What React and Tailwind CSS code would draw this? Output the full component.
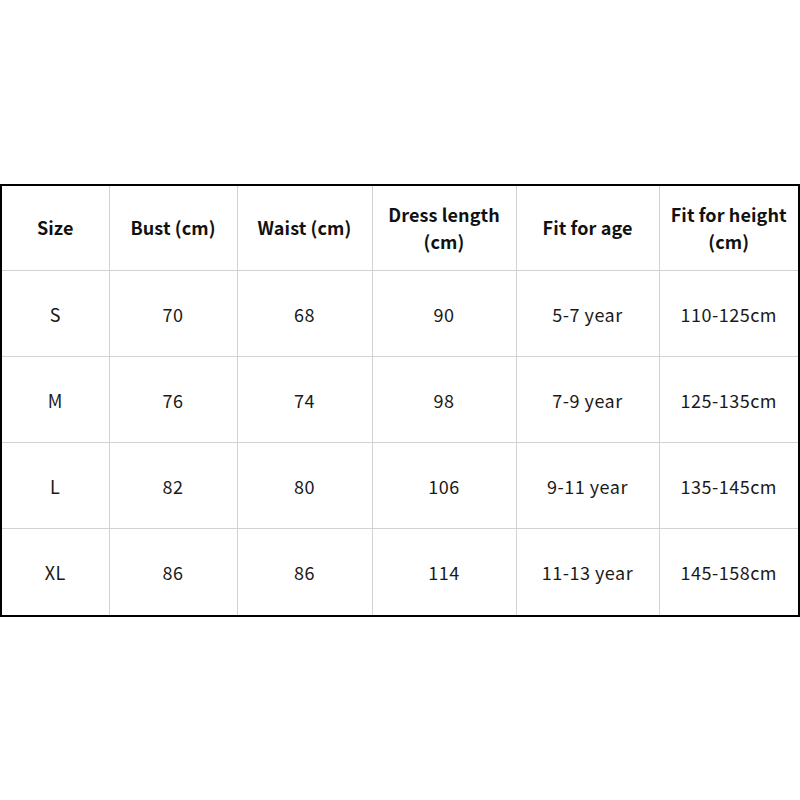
const headers = ['Size', 'Bust (cm)', 'Waist (cm)', ['Dress length', '(cm)'], 'Fit for age', ['Fit for height', '(cm)']];

const rows = [
  ['S', '70', '68', '90', '5-7 year', '110-125cm'],
  ['M', '76', '74', '98', '7-9 year', '125-135cm'],
  ['L', '82', '80', '106', '9-11 year', '135-145cm'],
  ['XL', '86', '86', '114', '11-13 year', '145-158cm'],
];

const widths = ['w-[107px]', 'w-[128px]', 'w-[135px]', 'w-[144px]', 'w-[143px]', 'w-[139px]'];

export default function App() {
  return (
    <div className="flex h-[800px] w-[800px] items-center bg-white" style={{ fontFamily: '"Noto Sans CJK KR", "Open Sans", sans-serif' }}>
      <div className="w-[800px] border-2 border-black">
        <table className="w-full table-fixed border-collapse">
          <thead>
            <tr className="h-[85px]">
              {headers.map((h, i) => (
                <th
                  key={i}
                  className={`${widths[i]} border-b border-[#d2d2d2] text-center align-middle text-[18px] font-bold leading-[27px] tracking-[0.1px] text-[#111] ${i > 0 ? 'border-l' : ''}`}
                >
                  {Array.isArray(h) ? (
                    <>
                      <div>{h[0]}</div>
                      <div>{h[1]}</div>
                    </>
                  ) : h}
                </th>
              ))}
            </tr>
          </thead>
          <tbody>
            {rows.map((row, r) => (
              <tr key={r} className="h-[86px]">
                {row.map((cell, i) => (
                  <td
                    key={i}
                    className={`pt-[2px] text-center align-middle text-[18px] tracking-[0.5px] text-[#1a1a1a] ${i > 0 ? 'border-l border-[#d2d2d2]' : ''} ${r < rows.length - 1 ? 'border-b border-[#d2d2d2]' : ''}`}
                  >
                    {cell}
                  </td>
                ))}
              </tr>
            ))}
          </tbody>
        </table>
      </div>
    </div>
  );
}
